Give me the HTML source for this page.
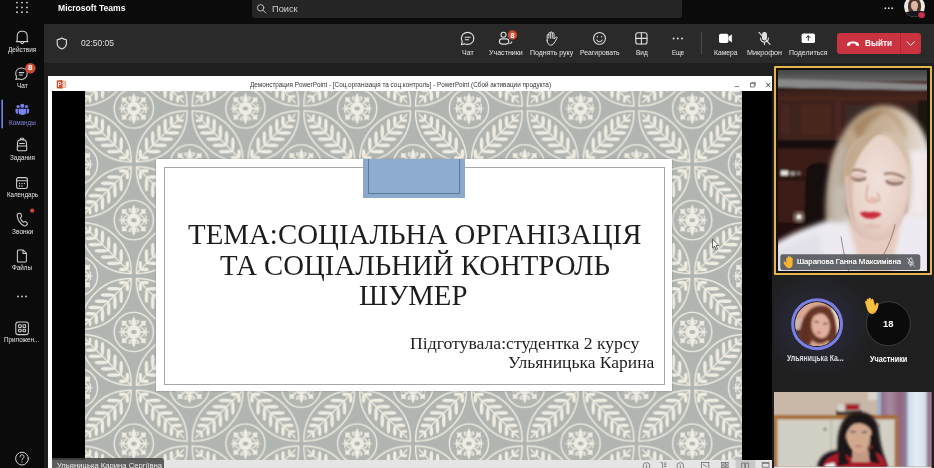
<!DOCTYPE html><html><head><meta charset="utf-8"><title>Teams</title><style>
*{box-sizing:border-box;margin:0;padding:0}
html,body{width:934px;height:468px;overflow:hidden;background:#1f1f1f;font-family:"Liberation Sans",sans-serif;color:#fff}
.abs{position:absolute}
#root{position:relative;width:934px;height:468px;overflow:hidden;background:#1f1f1f}
#topbar{left:0;top:0;width:934px;height:24px;background:#0b0b0b}
#rail{left:0;top:24px;width:44px;height:444px;background:#0b0b0b}
#mbar{left:44px;top:24px;width:890px;height:39px;background:#2a2a2a}
#search{left:252px;top:0;width:430px;height:18px;background:#252525;border-radius:0 0 3px 3px}
.t{position:absolute;white-space:nowrap;line-height:1;transform-origin:0 50%}
#ppt{left:47.6px;top:76.3px;width:724.4px;height:392px;background:#fff}
#pptblack{left:52px;top:91px;width:720px;height:369px;background:#000}
#slide{left:85px;top:91px;width:657px;height:369px;overflow:hidden;background:#b1b5b1}
#status{left:52px;top:460px;width:720px;height:8px;background:#e5e5e5}
#wbox{left:71px;top:68px;width:516px;height:232px;background:#fff;box-shadow:0 0 2px rgba(0,0,0,.25)}
#wline{left:78.5px;top:75.5px;width:501px;height:218.5px;border:1px solid #a6a6a6}
#tab{left:277.5px;top:67.5px;width:102.5px;height:39.5px;background:#8aa9cd}
#tabin{left:283px;top:67.5px;width:92px;height:35px;border:1px solid #5d7898;border-top:none;background:#8dacd0}
.ser{font-family:"Liberation Serif",serif;color:#1d1d1d}
.lbl{color:#e6e6e6}
</style></head><body><div id="root"><div id="topbar" class="abs"></div><div id="search" class="abs"></div><div id="rail" class="abs"></div><div id="mbar" class="abs"></div><div id="ppt" class="abs"></div><div id="pptblack" class="abs"></div><div id="status" class="abs"></div><div id="slide" class="abs"><svg class="pat" width="657" height="369" viewBox="0 0 657 369"><defs><g id="lens"><path d="M3.60,0 A49.75,49.75 0 0 1 75.38,0 A49.75,49.75 0 0 1 3.60,0 Z" fill="none" stroke="#efece1" stroke-width="1.45" stroke-linejoin="miter"/><path d="M4.60,0 L70.38,0" stroke="#efece1" stroke-width="1.35" stroke-linecap="round"/><path transform="translate(9.10,0) rotate(-45)" d="M0,-0.5 C1.70,-1.57 2.97,-1.75 5.10,-1.75 C7.48,-1.75 8.50,-1.22 8.50,0 C8.50,1.22 7.48,1.75 5.10,1.75 C2.97,1.75 1.70,1.57 0,0.5 Z" fill="#efece1"/><path transform="translate(9.10,0) rotate(45)" d="M0,-0.5 C1.70,-1.57 2.97,-1.75 5.10,-1.75 C7.48,-1.75 8.50,-1.22 8.50,0 C8.50,1.22 7.48,1.75 5.10,1.75 C2.97,1.75 1.70,1.57 0,0.5 Z" fill="#efece1"/><path transform="translate(17.90,0) rotate(-45)" d="M0,-0.5 C2.85,-1.57 4.99,-1.75 8.55,-1.75 C12.54,-1.75 14.25,-1.22 14.25,0 C14.25,1.22 12.54,1.75 8.55,1.75 C4.99,1.75 2.85,1.57 0,0.5 Z" fill="#efece1"/><path transform="translate(17.90,0) rotate(45)" d="M0,-0.5 C2.85,-1.57 4.99,-1.75 8.55,-1.75 C12.54,-1.75 14.25,-1.22 14.25,0 C14.25,1.22 12.54,1.75 8.55,1.75 C4.99,1.75 2.85,1.57 0,0.5 Z" fill="#efece1"/><path transform="translate(26.69,0) rotate(-45)" d="M0,-0.5 C2.85,-1.57 4.99,-1.75 8.55,-1.75 C12.54,-1.75 14.25,-1.22 14.25,0 C14.25,1.22 12.54,1.75 8.55,1.75 C4.99,1.75 2.85,1.57 0,0.5 Z" fill="#efece1"/><path transform="translate(26.69,0) rotate(45)" d="M0,-0.5 C2.85,-1.57 4.99,-1.75 8.55,-1.75 C12.54,-1.75 14.25,-1.22 14.25,0 C14.25,1.22 12.54,1.75 8.55,1.75 C4.99,1.75 2.85,1.57 0,0.5 Z" fill="#efece1"/><path transform="translate(35.49,0) rotate(-45)" d="M0,-0.5 C2.85,-1.57 4.99,-1.75 8.55,-1.75 C12.54,-1.75 14.25,-1.22 14.25,0 C14.25,1.22 12.54,1.75 8.55,1.75 C4.99,1.75 2.85,1.57 0,0.5 Z" fill="#efece1"/><path transform="translate(35.49,0) rotate(45)" d="M0,-0.5 C2.85,-1.57 4.99,-1.75 8.55,-1.75 C12.54,-1.75 14.25,-1.22 14.25,0 C14.25,1.22 12.54,1.75 8.55,1.75 C4.99,1.75 2.85,1.57 0,0.5 Z" fill="#efece1"/><path transform="translate(44.29,0) rotate(-45)" d="M0,-0.5 C2.85,-1.57 4.99,-1.75 8.55,-1.75 C12.54,-1.75 14.25,-1.22 14.25,0 C14.25,1.22 12.54,1.75 8.55,1.75 C4.99,1.75 2.85,1.57 0,0.5 Z" fill="#efece1"/><path transform="translate(44.29,0) rotate(45)" d="M0,-0.5 C2.85,-1.57 4.99,-1.75 8.55,-1.75 C12.54,-1.75 14.25,-1.22 14.25,0 C14.25,1.22 12.54,1.75 8.55,1.75 C4.99,1.75 2.85,1.57 0,0.5 Z" fill="#efece1"/><path transform="translate(53.09,0) rotate(-45)" d="M0,-0.5 C2.15,-1.57 3.76,-1.75 6.45,-1.75 C9.46,-1.75 10.75,-1.22 10.75,0 C10.75,1.22 9.46,1.75 6.45,1.75 C3.76,1.75 2.15,1.57 0,0.5 Z" fill="#efece1"/><path transform="translate(53.09,0) rotate(45)" d="M0,-0.5 C2.15,-1.57 3.76,-1.75 6.45,-1.75 C9.46,-1.75 10.75,-1.22 10.75,0 C10.75,1.22 9.46,1.75 6.45,1.75 C3.76,1.75 2.15,1.57 0,0.5 Z" fill="#efece1"/><path transform="translate(61.88,0) rotate(-45)" d="M0,-0.5 C1.25,-1.26 2.19,-1.40 3.75,-1.40 C5.50,-1.40 6.25,-0.98 6.25,0 C6.25,0.98 5.50,1.40 3.75,1.40 C2.19,1.40 1.25,1.26 0,0.5 Z" fill="#efece1"/><path transform="translate(61.88,0) rotate(45)" d="M0,-0.5 C1.25,-1.26 2.19,-1.40 3.75,-1.40 C5.50,-1.40 6.25,-0.98 6.25,0 C6.25,0.98 5.50,1.40 3.75,1.40 C2.19,1.40 1.25,1.26 0,0.5 Z" fill="#efece1"/></g><g id="medal"><circle r="19.6" fill="none" stroke="#efece1" stroke-width="1.35"/><path d="M-2.8,-6.6 L2.8,-6.6 L6.6,-2.8 L6.6,2.8 L2.8,6.6 L-2.8,6.6 L-6.6,2.8 L-6.6,-2.8 Z" fill="#efece1"/><g transform="rotate(0)"><path d="M0,-16 C1.2,-12.5 2.6,-11 2.4,-9 C2.2,-7.6 1.2,-7 1.2,-6 L-1.2,-6 C-1.2,-7 -2.2,-7.6 -2.4,-9 C-2.6,-11 -1.2,-12.5 0,-16 Z" fill="#efece1"/><path d="M-1,-8 C-2.5,-8 -4.8,-8.4 -4.8,-10.4 C-4.8,-11.6 -3.4,-11.8 -3,-10.8" fill="none" stroke="#efece1" stroke-width="1.3" stroke-linecap="round"/><path d="M1,-8 C2.5,-8 4.8,-8.4 4.8,-10.4 C4.8,-11.6 3.4,-11.8 3,-10.8" fill="none" stroke="#efece1" stroke-width="1.3" stroke-linecap="round"/></g><g transform="rotate(180)"><path d="M0,-16 C1.2,-12.5 2.6,-11 2.4,-9 C2.2,-7.6 1.2,-7 1.2,-6 L-1.2,-6 C-1.2,-7 -2.2,-7.6 -2.4,-9 C-2.6,-11 -1.2,-12.5 0,-16 Z" fill="#efece1"/><path d="M-1,-8 C-2.5,-8 -4.8,-8.4 -4.8,-10.4 C-4.8,-11.6 -3.4,-11.8 -3,-10.8" fill="none" stroke="#efece1" stroke-width="1.3" stroke-linecap="round"/><path d="M1,-8 C2.5,-8 4.8,-8.4 4.8,-10.4 C4.8,-11.6 3.4,-11.8 3,-10.8" fill="none" stroke="#efece1" stroke-width="1.3" stroke-linecap="round"/></g><g transform="rotate(90)"><path d="M0,-15.8 L1.1,-12 L0.8,-6 L-0.8,-6 L-1.1,-12 Z" fill="#efece1"/><path d="M-4.2,-7.4 C-4.6,-9.2 -1.4,-9.6 -1,-11 C-0.6,-12.6 -3.6,-13 -4,-11.6" fill="none" stroke="#efece1" stroke-width="1.3" stroke-linecap="round"/><path d="M4.2,-7.4 C4.6,-9.2 1.4,-9.6 1,-11 C0.6,-12.6 3.6,-13 4,-11.6" fill="none" stroke="#efece1" stroke-width="1.3" stroke-linecap="round"/></g><g transform="rotate(270)"><path d="M0,-15.8 L1.1,-12 L0.8,-6 L-0.8,-6 L-1.1,-12 Z" fill="#efece1"/><path d="M-4.2,-7.4 C-4.6,-9.2 -1.4,-9.6 -1,-11 C-0.6,-12.6 -3.6,-13 -4,-11.6" fill="none" stroke="#efece1" stroke-width="1.3" stroke-linecap="round"/><path d="M4.2,-7.4 C4.6,-9.2 1.4,-9.6 1,-11 C0.6,-12.6 3.6,-13 4,-11.6" fill="none" stroke="#efece1" stroke-width="1.3" stroke-linecap="round"/></g><path transform="translate(9.6,8.8)" d="M-2.7,-2.7 L-0.9,-2.2 L0.9,-2.2 L2.7,-2.7 L2.2,-0.9 L2.2,0.9 L2.7,2.7 L0.9,2.2 L-0.9,2.2 L-2.7,2.7 L-2.2,0.9 L-2.2,-0.9 Z" fill="#efece1"/><path d="M5,4.6 L8.2,7.4" stroke="#efece1" stroke-width="1.8"/><path transform="translate(9.6,-8.8)" d="M-2.7,-2.7 L-0.9,-2.2 L0.9,-2.2 L2.7,-2.7 L2.2,-0.9 L2.2,0.9 L2.7,2.7 L0.9,2.2 L-0.9,2.2 L-2.7,2.7 L-2.2,0.9 L-2.2,-0.9 Z" fill="#efece1"/><path d="M5,-4.6 L8.2,-7.4" stroke="#efece1" stroke-width="1.8"/><path transform="translate(-9.6,8.8)" d="M-2.7,-2.7 L-0.9,-2.2 L0.9,-2.2 L2.7,-2.7 L2.2,-0.9 L2.2,0.9 L2.7,2.7 L0.9,2.2 L-0.9,2.2 L-2.7,2.7 L-2.2,0.9 L-2.2,-0.9 Z" fill="#efece1"/><path d="M-5,4.6 L-8.2,7.4" stroke="#efece1" stroke-width="1.8"/><path transform="translate(-9.6,-8.8)" d="M-2.7,-2.7 L-0.9,-2.2 L0.9,-2.2 L2.7,-2.7 L2.2,-0.9 L2.2,0.9 L2.7,2.7 L0.9,2.2 L-0.9,2.2 L-2.7,2.7 L-2.2,0.9 L-2.2,-0.9 Z" fill="#efece1"/><path d="M-5,-4.6 L-8.2,-7.4" stroke="#efece1" stroke-width="1.8"/><ellipse rx="2.8" ry="2.1" fill="#b1b5b1"/></g><pattern id="dam" width="111.7" height="111.7" patternUnits="userSpaceOnUse" patternTransform="translate(48.80,17.50)"><rect width="111.7" height="111.7" fill="#b1b5b1"/><use href="#medal" x="0.00" y="0.00"/><use href="#medal" x="111.70" y="0.00"/><use href="#medal" x="0.00" y="111.70"/><use href="#medal" x="111.70" y="111.70"/><use href="#medal" x="55.85" y="55.85"/><use href="#lens" transform="translate(0.00,55.85) rotate(-45.00)"/><use href="#lens" transform="translate(111.70,55.85) rotate(-135.00)"/><use href="#lens" transform="translate(0.00,55.85) rotate(45.00)"/><use href="#lens" transform="translate(111.70,55.85) rotate(135.00)"/></pattern></defs><rect width="657" height="369" fill="url(#dam)"/></svg><div id="wbox" class="abs"></div><div id="wline" class="abs"></div><div id="tab" class="abs"></div><div id="tabin" class="abs"></div></div><div class="t " style="left:57.7px;top:4.30px;font-size:8.8px;height:8.8px;font-weight:bold;transform:scaleX(0.9733);">Microsoft Teams</div><div class="t " style="left:272px;top:4.80px;font-size:8.4px;height:8.4px;color:#d0d0d0;transform:scaleX(1.1026);">Поиск</div><div class="t " style="left:80.5px;top:39.10px;font-size:9px;height:9px;color:#e0e0e0;transform:scaleX(0.9416);">02:50:05</div><div class="t lbl" style="left:462px;top:48.75px;font-size:7.5px;height:7.5px;transform:scaleX(0.9315);">Чат</div><div class="t lbl" style="left:489.3px;top:48.75px;font-size:7.5px;height:7.5px;transform:scaleX(0.9430);">Участники</div><div class="t lbl" style="left:530px;top:48.75px;font-size:7.5px;height:7.5px;transform:scaleX(0.9319);">Поднять руку</div><div class="t lbl" style="left:580.3px;top:48.75px;font-size:7.5px;height:7.5px;transform:scaleX(0.9094);">Реагировать</div><div class="t lbl" style="left:636px;top:48.75px;font-size:7.5px;height:7.5px;transform:scaleX(0.8690);">Вид</div><div class="t lbl" style="left:672px;top:48.75px;font-size:7.5px;height:7.5px;transform:scaleX(0.7992);">Еще</div><div class="t lbl" style="left:713.8px;top:48.75px;font-size:7.5px;height:7.5px;transform:scaleX(0.8963);">Камера</div><div class="t lbl" style="left:747px;top:48.75px;font-size:7.5px;height:7.5px;transform:scaleX(0.9577);">Микрофон</div><div class="t lbl" style="left:788.6px;top:48.75px;font-size:7.5px;height:7.5px;transform:scaleX(0.9295);">Поделиться</div><div class="t lbl" style="left:8.2px;top:46.60px;font-size:6.8px;height:6.8px;transform:scaleX(0.9503);">Действия</div><div class="t lbl" style="left:17px;top:83.10px;font-size:6.8px;height:6.8px;transform:scaleX(0.9573);">Чат</div><div class="t " style="left:9px;top:119.60px;font-size:6.8px;height:6.8px;color:#8286d9;transform:scaleX(0.9302);">Команды</div><div class="t lbl" style="left:9.9px;top:155.00px;font-size:6.8px;height:6.8px;transform:scaleX(0.9265);">Задания</div><div class="t lbl" style="left:6.6px;top:191.90px;font-size:6.8px;height:6.8px;transform:scaleX(0.9035);">Календарь</div><div class="t lbl" style="left:11.8px;top:228.80px;font-size:6.8px;height:6.8px;transform:scaleX(0.9657);">Звонки</div><div class="t lbl" style="left:12.2px;top:265.00px;font-size:6.8px;height:6.8px;transform:scaleX(0.9255);">Файлы</div><div class="t lbl" style="left:3.5px;top:337.40px;font-size:6.8px;height:6.8px;transform:scaleX(0.9297);">Приложен...</div><div class="t " style="left:249.5px;top:81.70px;font-size:6.6px;height:6.6px;color:#333;transform:scaleX(0.9625);">Демонстрация PowerPoint - [Соц.організація та соц.контроль] - PowerPoint (Сбой активации продукта)</div><div class="t ser" style="left:187.6px;top:219.40px;font-size:30.2px;height:30.2px;transform:scaleX(0.9572);">ТЕМА:СОЦІАЛЬНА ОРГАНІЗАЦІЯ</div><div class="t ser" style="left:219.8px;top:250.10px;font-size:30.2px;height:30.2px;transform:scaleX(0.9528);">ТА СОЦІАЛЬНИЙ КОНТРОЛЬ</div><div class="t ser" style="left:359.4px;top:279.70px;font-size:30.2px;height:30.2px;transform:scaleX(0.9517);">ШУМЕР</div><div class="t ser" style="left:410.2px;top:335.00px;font-size:17px;height:17px;transform:scaleX(1.0393);">Підготувала:студентка 2 курсу</div><div class="t ser" style="left:508.4px;top:354.10px;font-size:17px;height:17px;transform:scaleX(1.0316);">Ульяницька Карина</div><div class="t " style="left:864.8px;top:39.25px;font-size:8.9px;height:8.9px;font-weight:bold;z-index:5;transform:scaleX(0.9231);">Выйти</div><div class="t " style="left:786.8px;top:354.20px;font-size:8.4px;height:8.4px;font-weight:bold;transform:scaleX(0.8253);">Ульяницька Ка...</div><div class="t " style="left:869.7px;top:354.80px;font-size:8.4px;height:8.4px;font-weight:bold;transform:scaleX(0.8665);">Участники</div><div class="t " style="left:883.2px;top:318.85px;font-size:9.5px;height:9.5px;font-weight:bold;z-index:5;transform:scaleX(0.9926);">18</div><div class="t " style="left:797.2px;top:258.10px;font-size:7.8px;height:7.8px;z-index:6;color:#f4f4f4;text-shadow:0 0 0.3px #fff;transform:scaleX(0.9899);">Шарапова Ганна Максимівна</div><div class="t " style="left:56.5px;top:461.95px;font-size:7.9px;height:7.9px;z-index:6;color:#f0f0f0;transform:scaleX(0.9719);">Ульяницька Карина Сергіївна</div><svg class="abs" style="left:0;top:0" width="50" height="468" viewBox="0 0 50 468" fill="none" stroke="#cfcfcf" stroke-width="1.05" stroke-linecap="round" stroke-linejoin="round">
<!-- waffle -->
<g fill="#e8e8e8" stroke="none">
<circle cx="17" cy="2.6" r="0.85"/><circle cx="22" cy="2.6" r="0.85"/><circle cx="27" cy="2.6" r="0.85"/>
<circle cx="17" cy="7.4" r="0.85"/><circle cx="22" cy="7.4" r="0.85"/><circle cx="27" cy="7.4" r="0.85"/>
<circle cx="17" cy="12.2" r="0.85"/><circle cx="22" cy="12.2" r="0.85"/><circle cx="27" cy="12.2" r="0.85"/>
</g>
<!-- bell -->
<path d="M17.2,40.6 L17.2,36 C17.2,33 19.2,31.2 22.2,31.2 C25.2,31.2 27.2,33 27.2,36 L27.2,40.6 L28,41.6 L16.4,41.6 Z"/>
<path d="M20.6,42 C20.8,43.2 21.4,43.6 22.2,43.6 C23,43.6 23.6,43.2 23.8,42"/>
<!-- chat -->
<path d="M21.4,68 C24.8,68 27.2,70.4 27.2,73.6 C27.2,76.8 24.8,79.4 21.4,79.4 C20.4,79.4 19.4,79.2 18.6,78.8 L15.8,79.6 L16.6,76.8 C16,75.8 15.7,74.8 15.7,73.6 C15.7,70.4 18,68 21.4,68 Z"/>
<path d="M19.2,72.6 L23.8,72.6 M19.2,75 L22.4,75"/>
<circle cx="30.4" cy="68.2" r="5.2" fill="#cc4a31" stroke="none"/>
<!-- active bar -->
<rect x="1.4" y="99.5" width="1.6" height="29" rx="0.8" fill="#7b83eb" stroke="none"/>
<!-- teams icon -->
<g fill="#7b83eb" stroke="none" transform="translate(22.3,110) scale(0.84) translate(-22.3,-110.6)">
<circle cx="22.3" cy="105.6" r="2.5"/><circle cx="17.3" cy="106.4" r="1.9"/><circle cx="27.3" cy="106.4" r="1.9"/>
<path d="M18.6,109 L26,109 C26.5,109 26.8,109.3 26.8,109.8 L26.8,113 C26.8,115.4 24.9,116.6 22.3,116.6 C19.7,116.6 17.8,115.4 17.8,113 L17.8,109.8 C17.8,109.3 18.1,109 18.6,109 Z"/>
<path d="M14.8,109.2 L17,109.2 L17,113.4 C17,114.2 17.2,114.8 17.5,115.3 C15.7,115.2 14.2,114.2 14.2,112.4 L14.2,109.8 C14.2,109.4 14.4,109.2 14.8,109.2 Z"/>
<path d="M29.8,109.2 L27.6,109.2 L27.6,113.4 C27.6,114.2 27.4,114.8 27.1,115.3 C28.9,115.2 30.4,114.2 30.4,112.4 L30.4,109.8 C30.4,109.4 30.2,109.2 29.8,109.2 Z"/>
</g>
<!-- assignments (backpack) -->
<path d="M17.6,142.6 C17.6,140.4 19.4,139.6 22,139.6 C24.6,139.6 26.4,140.4 26.4,142.6 L26.8,149.6 C26.8,150.4 26.4,150.8 25.6,150.8 L18.4,150.8 C17.6,150.8 17.2,150.4 17.2,149.6 Z"/>
<path d="M20.2,139.6 C20.2,138.4 20.8,138 22,138 C23.2,138 23.8,138.4 23.8,139.6 M17.4,146 L26.6,146 M19.6,143.4 L24.4,143.4"/>
<!-- calendar -->
<rect x="16.6" y="177.6" width="10.8" height="10.8" rx="2"/>
<path d="M16.6,180.8 L27.4,180.8"/>
<g fill="#dcdcdc" stroke="none"><circle cx="19.6" cy="183.6" r="0.7"/><circle cx="22" cy="183.6" r="0.7"/><circle cx="24.4" cy="183.6" r="0.7"/><circle cx="19.6" cy="186" r="0.7"/><circle cx="22" cy="186" r="0.7"/></g>
<!-- calls -->
<path d="M18.2,213.6 L19.8,213.2 C20.3,213.1 20.7,213.4 20.9,213.8 L21.6,215.8 C21.7,216.2 21.6,216.6 21.3,216.9 L20.3,217.8 C20.8,219.6 22,221.2 23.6,222.2 L24.8,221.6 C25.2,221.4 25.6,221.5 25.9,221.8 L27.2,223.2 C27.5,223.6 27.5,224.1 27.2,224.4 L26.4,225.4 C25.8,226 24.9,226.2 24.1,225.8 C20.4,224 17.8,220 17.2,215.6 C17.1,214.7 17.5,213.9 18.2,213.6 Z"/>
<circle cx="32.2" cy="210.7" r="2.1" fill="#cc4a31" stroke="none"/>
<!-- files -->
<path d="M18.4,250 L23.2,250 L26.4,253.2 L26.4,261 C26.4,261.6 26,262 25.4,262 L18.4,262 C17.8,262 17.4,261.6 17.4,261 L17.4,251 C17.4,250.4 17.8,250 18.4,250 Z M23,250.2 L23,253.4 L26.2,253.4"/>
<!-- more -->
<g fill="#d0d0d0" stroke="none"><circle cx="18" cy="296.5" r="0.9"/><circle cx="22" cy="296.5" r="0.9"/><circle cx="26" cy="296.5" r="0.9"/></g>
<!-- apps -->
<rect x="15.8" y="322" width="12.6" height="12.6" rx="2.4"/>
<rect x="18.6" y="324.8" width="2.6" height="2.6" rx="0.5"/><rect x="23" y="324.8" width="2.6" height="2.6" rx="0.5"/>
<rect x="18.6" y="329.2" width="2.6" height="2.6" rx="0.5"/><rect x="23" y="329.2" width="2.6" height="2.6" rx="0.5"/>
<!-- help -->
<circle cx="22" cy="458.6" r="6.4" stroke-width="1"/>
<path d="M20,456.8 C20,455.4 20.8,454.8 22,454.8 C23.2,454.8 24,455.5 24,456.6 C24,458.2 22,458.2 22,459.8" stroke-width="1"/>
<circle cx="22" cy="461.8" r="0.6" fill="#dcdcdc" stroke="none"/>
</svg>
<div class="t" style="left:28.1px;top:64.4px;font-size:8px;height:8px;font-weight:bold;color:#fff;z-index:3">8</div>
<!-- leave button -->
<div class="abs" style="left:837px;top:33px;width:84px;height:21px;background:#cc3340;border-radius:3px"></div>
<div class="abs" style="left:899.5px;top:33px;width:1px;height:21px;background:#b02634"></div>
<svg class="abs" style="left:44px;top:0" width="890" height="64" viewBox="44 0 890 64" fill="none" stroke="#e0e0e0" stroke-width="1.1" stroke-linecap="round" stroke-linejoin="round">
<!-- search icon -->
<circle cx="260.6" cy="7.8" r="3.2" stroke="#c4c4c4" stroke-width="0.95"/><path d="M263,10.2 L265.8,13" stroke="#c4c4c4" stroke-width="0.95"/>
<!-- top-right more -->
<g fill="#e0e0e0" stroke="none"><circle cx="885.4" cy="8.2" r="0.9"/><circle cx="888.8" cy="8.2" r="0.9"/><circle cx="892.2" cy="8.2" r="0.9"/></g>
<!-- shield -->
<path d="M61.8,38 C63.4,39.2 64.8,39.6 66.4,39.8 L66.4,43.4 C66.4,46 64.6,47.8 61.8,48.9 C59,47.8 57.2,46 57.2,43.4 L57.2,39.8 C58.8,39.6 60.2,39.2 61.8,38 Z"/>
<!-- chat -->
<path d="M467.6,32.4 C471.2,32.4 473.8,35 473.8,38.4 C473.8,41.8 471.2,44.4 467.6,44.4 C466.5,44.4 465.5,44.2 464.6,43.7 L461.4,44.6 L462.3,41.5 C461.7,40.6 461.4,39.5 461.4,38.4 C461.4,35 464,32.4 467.6,32.4 Z"/>
<path d="M465.2,37.2 L470.2,37.2 M465.2,39.8 L468.6,39.8"/>
<!-- people -->
<circle cx="503.5" cy="34.7" r="2.5"/>
<rect x="499.4" y="38.9" width="9.4" height="5.2" rx="2.5"/>
<path d="M509.8,43.5 C511,43.3 511.7,42.7 511.9,41.7"/>
<circle cx="512.4" cy="35" r="4.7" fill="#cc4a31" stroke="none"/>
<!-- hand -->
<path d="M547.2,40.6 L547.2,35.2 C547.2,34 548.9,34 548.9,35.2 L548.9,33.2 C548.9,32 550.6,32 550.6,33.2 L550.6,32.8 C550.6,31.6 552.3,31.6 552.3,32.8 L552.3,33.6 C552.3,32.5 554,32.5 554,33.7 L554,39 L555.6,37.2 C556.4,36.4 557.6,37.2 557,38.2 C556,40 554.8,42.6 553.2,44.2 C551.8,45.6 549.4,45.4 548.2,43.8 C547.4,42.8 547.2,41.8 547.2,40.6 Z" stroke-width="1"/>
<path d="M548.9,35.2 L548.9,38.2 M550.6,33.2 L550.6,38.2 M552.3,33.6 L552.3,38.2" stroke-width="0.9"/>
<!-- smiley -->
<circle cx="599.5" cy="38.4" r="5.9"/>
<circle cx="597.4" cy="36.8" r="0.7" fill="#e0e0e0" stroke="none"/><circle cx="601.6" cy="36.8" r="0.7" fill="#e0e0e0" stroke="none"/>
<path d="M596.8,40 C597.6,41.4 598.4,41.8 599.5,41.8 C600.6,41.8 601.4,41.4 602.2,40"/>
<!-- view grid -->
<rect x="635.8" y="32.8" width="11.2" height="11.2" rx="2"/><path d="M641.4,32.8 L641.4,44 M635.8,38.4 L647,38.4"/>
<!-- more -->
<g fill="#e0e0e0" stroke="none"><circle cx="673.6" cy="38.4" r="1"/><circle cx="677.8" cy="38.4" r="1"/><circle cx="682" cy="38.4" r="1"/></g>
<path d="M701.4,33 L701.4,54" stroke="#555" stroke-width="0.9"/>
<!-- camera -->
<rect x="719" y="33.8" width="9.4" height="9.2" rx="1.8" fill="#fff" stroke="none"/>
<path d="M729,36.8 L731.6,34.8 L731.6,42 L729,40 Z" fill="#fff" stroke="#fff" stroke-width="0.6"/>
<!-- mic off -->
<rect x="762.6" y="32.6" width="3.8" height="7.4" rx="1.9" fill="#dcdcdc"/>
<path d="M760.6,38 C760.6,40.6 762.2,42 764.5,42 C766.8,42 768.4,40.6 768.4,38 M764.5,42 L764.5,44.6"/>
<path d="M759,32.4 L770,44.4" stroke-width="1.1"/>
<!-- share -->
<rect x="801.6" y="33.4" width="13.4" height="9.6" rx="1.6" fill="#fff" stroke="none"/>
<path d="M808.3,40.4 L808.3,36 M806.4,37.6 L808.3,35.7 L810.2,37.6" stroke="#2a2a2a" stroke-width="1"/>
<!-- hang up phone -->
<path d="M847,44.6 C847,42.6 849.8,41.4 853,41.4 C856.2,41.4 859,42.6 859,44.6 L859,45.2 C859,45.8 858.6,46 858.2,45.9 L856.2,45.5 C855.8,45.4 855.6,45.1 855.6,44.8 L855.6,43.8 C854,43.3 852,43.3 850.4,43.8 L850.4,44.8 C850.4,45.1 850.2,45.4 849.8,45.5 L847.8,45.9 C847.4,46 847,45.8 847,45.2 Z" fill="#fff" stroke="none"/>
<path d="M907,41.8 L910.7,45.4 L914.4,41.8" stroke="#fff" stroke-width="1"/>
</svg>
<div class="t" style="left:510.4px;top:31.5px;font-size:7.2px;height:7.2px;font-weight:bold;color:#fff;z-index:3">8</div>
<!-- user avatar -->
<div class="abs" style="left:904px;top:-4.2px;width:21.4px;height:21.4px;border-radius:50%;overflow:hidden;background:#ece8e2">
 <div class="abs" style="left:4.4px;top:2px;width:12.6px;height:17px;border-radius:45%;background:#4b362b"></div>
 <div class="abs" style="left:7.4px;top:5.6px;width:7px;height:9px;border-radius:50%;background:#dcb7a4"></div>
 <div class="abs" style="left:9.2px;top:13px;width:3.6px;height:4px;background:#d2a894"></div>
 <div class="abs" style="left:-1px;top:15.4px;width:24px;height:9px;border-radius:45% 45% 0 0;background:#15171e"></div>
</div>
<div class="abs" style="left:917.4px;top:10.6px;width:8.4px;height:8.4px;border-radius:50%;background:#c4314b;border:0.8px solid #0b0b0b"></div>
<!-- video 1 frame -->
<div class="abs" style="left:774px;top:66px;width:157.5px;height:209px;background:#15100d;border:2.6px solid #e5b64c;border-radius:1px"></div>
<svg class="abs" style="left:778px;top:69.5px" width="149" height="201.5" viewBox="778 69.5 149 201.5">
<defs>
<filter id="b1" x="-10%" y="-10%" width="120%" height="120%"><feGaussianBlur stdDeviation="1.1"/></filter>
<filter id="b2" x="-20%" y="-20%" width="140%" height="140%"><feGaussianBlur stdDeviation="2.4"/></filter>
<filter id="b3" x="-30%" y="-30%" width="160%" height="160%"><feGaussianBlur stdDeviation="4.5"/></filter>
<linearGradient id="hairg" x1="0" y1="0" x2="1" y2="0"><stop offset="0" stop-color="#ad9c87"/><stop offset="0.3" stop-color="#bfa98d"/><stop offset="0.6" stop-color="#c8b196"/><stop offset="0.85" stop-color="#ded3c8"/><stop offset="1" stop-color="#ebe6e3"/></linearGradient>
<linearGradient id="ceil" x1="0" y1="0" x2="0" y2="1"><stop offset="0" stop-color="#3c3c3c"/><stop offset="1" stop-color="#666"/></linearGradient>
<radialGradient id="root" cx="0.5" cy="0.5" r="0.5"><stop offset="0" stop-color="#a38465" stop-opacity="1"/><stop offset="0.6" stop-color="#b4977a" stop-opacity="0.8"/><stop offset="1" stop-color="#c2aa90" stop-opacity="0"/></radialGradient><radialGradient id="faceg" cx="0.5" cy="0.45" r="0.6"><stop offset="0" stop-color="#f1e1da"/><stop offset="0.7" stop-color="#e8d2c8"/><stop offset="1" stop-color="#d8b9ad"/></radialGradient>
</defs>
<rect x="778" y="69.5" width="149" height="201.5" fill="#3a1d19"/>
<g filter="url(#b1)">
 <!-- ceiling -->
 <rect x="776" y="67" width="153" height="14" fill="url(#ceil)"/>
 <path d="M776,78.6 L929,83.2 L929,90 L776,87 Z" fill="#898989"/>
 <path d="M776,87 L929,90 L929,93 L776,90 Z" fill="#2a1512"/>
 <!-- cabinets -->
 <rect x="776" y="90" width="153" height="50" fill="#40211c"/>
 <rect x="801" y="104" width="30" height="30.5" fill="#4a271f"/>
 <rect x="781" y="104" width="9" height="30" fill="#472520"/>
 <rect x="835" y="96" width="6" height="44" fill="#4a2720"/>
 <rect x="845" y="105" width="50" height="30" fill="#3a2a28"/>
 <rect x="905" y="104" width="18" height="30" fill="#33221f"/>
 <rect x="776" y="96" width="153" height="3.5" fill="#4a251e"/>
 <rect x="776" y="139.5" width="153" height="8.5" fill="#150b0a"/>
 <rect x="776" y="148" width="40" height="80" fill="#3b1c17"/>
 <rect x="918" y="100" width="11" height="60" fill="#1d1211"/>
 <!-- lower left bg -->
 <rect x="776" y="176" width="32" height="4" fill="#2a1411"/>
 <rect x="776" y="222" width="70" height="22" fill="#24110f"/>
 <!-- chair / dark shape -->
 <path d="M806,172 C806,160 830,158 832,172 L834,226 L804,230 Z" fill="#120c0b"/>
 <rect x="781" y="170" width="7" height="5" fill="#e8e4de"/><rect x="790" y="171" width="5" height="4" fill="#9a948c"/><rect x="796.5" y="171" width="4" height="3.6" fill="#77706a"/>
</g>
<circle cx="799" cy="216.5" r="4.6" fill="#d9d4cc" filter="url(#b2)" opacity="0.9"/>
<circle cx="799" cy="216.3" r="2" fill="#fff" filter="url(#b1)"/>
<!-- hair back -->
<g filter="url(#b2)">
 <path d="M826,222 C824,196 828,160 840,138 C852,114 872,104 886,105 C906,106 922,122 929,146 L931,222 L905,224 L905,180 L850,176 L848,222 Z" fill="url(#hairg)"/>
 <path d="M852,128 C862,112 880,106 892,110 C880,112 868,122 860,140 Z" fill="#a5835f" opacity="0.9"/>
 <path d="M878,108 C890,112 900,124 906,140 C908,126 896,108 878,108 Z" fill="#b3936f" opacity="0.8"/>
 <ellipse cx="876" cy="128" rx="44" ry="30" fill="url(#root)"/>
</g>
<!-- shirt -->
<g filter="url(#b2)">
 <path d="M774,244 C790,232 820,222 846,214 L862,230 L884,236 L900,212 C912,212 922,214 931,216 L931,275 L774,275 Z" fill="#edebf1"/>
 <path d="M774,252 C790,242 806,236 820,232 L824,275 L774,275 Z" fill="#e2e1ea"/>
</g>
<!-- neck -->
<path d="M848,222 C852,238 858,256 862,275 L892,275 C894,256 898,236 902,216 Z" fill="#e6cbc0" filter="url(#b2)"/>
<!-- face -->
<g filter="url(#b1)">
 <path d="M845,170 C845,150 856,134 880,134 C902,134 911,150 910,176 C910,200 906,222 890,236 C878,243 862,240 853,228 C846,214 844,190 845,170 Z" fill="url(#faceg)"/>
</g>
<g filter="url(#b1)">
 <path d="M848,171.4 C853,168.6 860,168.8 866,171.8" stroke="#7d5c48" stroke-width="2.1" fill="none" opacity="0.85"/>
 <path d="M884,173.4 C891,171.8 899,174 905,178" stroke="#7d5c48" stroke-width="2.1" fill="none" opacity="0.85"/>
 <path d="M850.6,176.6 C855,179.6 861,179.8 865.6,177.6 C861,181 854,180.6 850.6,176.6 Z" stroke="#3a2a26" stroke-width="1.4" fill="#4a3631"/>
 <path d="M886,180.4 C891,183.4 897,183.8 902.6,181.6 C897,185 890,184.4 886,180.4 Z" stroke="#3a2a26" stroke-width="1.4" fill="#4a3631"/>
 <path d="M846,176 C846,196 850,214 856,226 C852,206 852,190 854,176 Z" fill="#cfa999" opacity="0.55"/>
 <path d="M868,184 C867,190 865.6,195 866.6,199.6 C869,202.6 877,202.6 879.4,199.4 C880,196 878,194 877,192" fill="none" stroke="#cf9f90" stroke-width="1.5" opacity="0.85"/>
 <ellipse cx="873" cy="199.4" rx="4.6" ry="2.8" fill="#e3b7a8" opacity="0.8"/>
 <path d="M859.6,212.6 C864,210.4 867,211.2 870,211.8 C873,210.8 878,211.2 881.6,213.8 C878,217.8 872,219 866.6,217.8 C863.6,217 861,215 859.6,212.6 Z" fill="#c92f3c"/>
 <ellipse cx="872" cy="226" rx="9" ry="3" fill="#dcb8ac" opacity="0.6"/>
</g>
<g filter="url(#b1)">
 <path d="M843,176 C843,150 858,131 881,131 C872,138 858,150 851,176 Z" fill="#c3ab90"/>
 <path d="M881,131 C903,131 913,150 912,180 C908,158 898,142 881,131 Z" fill="#d3c0aa"/>
 <ellipse cx="858" cy="178" rx="8" ry="4" fill="#cfa697" opacity="0.45"/>
 <ellipse cx="894" cy="181.6" rx="8" ry="4" fill="#cfa697" opacity="0.45"/>
</g>
<!-- hair front strands -->
<g filter="url(#b2)">
 <path d="M846,150 C840,170 838,200 842,220 L832,222 C828,196 830,164 842,140 Z" fill="#bdb2a6"/>
 <path d="M909,150 C914,170 914,196 908,214 L926,214 L929,150 Z" fill="#efeceb"/>
 <path d="M836,186 C832,200 834,214 838,222 L850,222 C844,210 846,196 848,184 Z" fill="#c6bdb3" opacity="0.9"/>
</g>
<!-- necklace -->
<path d="M841,236 C843,250 846,262 849,271 M895,224 C892,238 887,248 883,255" stroke="#5a4038" stroke-width="0.7" fill="none" opacity="0.8"/>
<!-- name tag -->
<rect x="780.3" y="253.7" width="140" height="15.9" rx="2.4" fill="#53565b" opacity="0.9"/>
<!-- hand emoji -->
<g transform="translate(789,261.8) scale(0.72)">
 <path d="M-3,7 C-5.4,5 -7.6,1.6 -7.6,-0.4 C-7.6,-1.8 -6,-2 -5.2,-0.8 L-3.8,1.2 L-3.8,-5.6 C-3.8,-7.2 -1.6,-7.2 -1.6,-5.6 L-1.6,-7.4 C-1.6,-9 0.6,-9 0.6,-7.4 L0.6,-7 C0.6,-8.6 2.8,-8.6 2.8,-7 L2.8,-5.6 C2.8,-7 5,-7 5,-5.4 L5,2 C5,5 3.6,7.8 0.6,8.2 C-0.8,8.4 -2,7.8 -3,7 Z" fill="#f5b62e"/>
</g>
<!-- mic off -->
<g stroke="#e8e8e8" stroke-width="0.8" fill="none" stroke-linecap="round">
 <rect x="909.5" y="257.6" width="2.6" height="5" rx="1.3"/>
 <path d="M908.2,261.4 C908.2,263.2 909.3,264.2 910.8,264.2 C912.3,264.2 913.4,263.2 913.4,261.4 M910.8,264.2 L910.8,266"/>
 <path d="M907.2,257.6 L914.4,265.8"/>
</g>
</svg>
<!-- avatar glow + ring -->
<div class="abs" style="left:774px;top:278px;width:160px;height:110px;background:radial-gradient(ellipse 62px 58px at 43px 46px, rgba(52,56,92,.55), rgba(31,31,31,0) 100%)"></div>
<svg class="abs" style="left:785px;top:292px" width="130" height="66" viewBox="785 292 130 66">
<defs>
<filter id="c1" x="-20%" y="-20%" width="140%" height="140%"><feGaussianBlur stdDeviation="1.2"/></filter>
<clipPath id="avc"><circle cx="817.1" cy="324.2" r="21.9"/></clipPath>
</defs>
<circle cx="817.1" cy="324.2" r="24.4" fill="#17171c" stroke="#7a7fe3" stroke-width="3.1"/>
<g clip-path="url(#avc)">
 <rect x="790" y="298" width="56" height="56" fill="#d4a08b"/>
 <g filter="url(#c1)">
  <rect x="790" y="296" width="34" height="20" fill="#dca793"/>
  <rect x="832" y="306" width="14" height="34" fill="#f2dfcd"/>
  <rect x="836" y="336" width="12" height="14" fill="#c98f78"/>
  <rect x="793" y="318" width="9" height="11" fill="#cdb3aa"/>
  <rect x="793" y="330" width="8" height="6" fill="#3a2f38"/>
  <path d="M798,352 C797,334 802,312 814,307 C824,303 833,308 835,318 C838,330 838,342 834,350 L826,356 L800,356 Z" fill="#693526"/>
  <ellipse cx="820.6" cy="325.6" rx="9.2" ry="12.6" transform="rotate(-8 820.6 325.6)" fill="#e2b19e"/>
  <path d="M810,318 C809,328 808,340 810,350 L801,352 C799,340 802,324 808,314 Z" fill="#5f2d20"/>
  <path d="M811,312 C816,307 828,307 832,316 C826,312 818,312 811,318 Z" fill="#693526"/>
  <path d="M812,340 C816,345 824,345 828,340 L832,356 L806,356 Z" fill="#d7a38f"/>
  <ellipse cx="818.6" cy="332.6" rx="2.4" ry="1.2" fill="#b96563"/>
  <path d="M814.6,321.4 L818.6,322.4 M823.4,324 L827.4,323.4" stroke="#3e241f" stroke-width="1.3"/>
 </g>
</g>
<!-- count circle -->
<circle cx="888.4" cy="323.7" r="22" fill="#0b0b0b" stroke="#4c4c4c" stroke-width="0.7"/>
<!-- hand emoji -->
<g transform="translate(871.3,306) rotate(-16) scale(-0.98,0.98)">
 <path d="M-3,7 C-5.4,5 -7.6,1.6 -7.6,-0.4 C-7.6,-1.8 -6,-2 -5.2,-0.8 L-3.8,1.2 L-3.8,-5.6 C-3.8,-7.2 -1.6,-7.2 -1.6,-5.6 L-1.6,-7.4 C-1.6,-9 0.6,-9 0.6,-7.4 L0.6,-7 C0.6,-8.6 2.8,-8.6 2.8,-7 L2.8,-5.6 C2.8,-7 5,-7 5,-5.4 L5,2 C5,5 3.6,7.8 0.6,8.2 C-0.8,8.4 -2,7.8 -3,7 Z" fill="#f6bf3d"/>
 <path d="M-3,7 C-1.4,8.2 1.6,8.4 3.2,6.4 C1.6,7.4 -1,7.4 -3,6 Z" fill="#d8952a"/>
</g>
</svg>
<!-- video 2 -->
<svg class="abs" style="left:774px;top:392px" width="157.5" height="76" viewBox="774 392 157.5 76">
<defs>
<filter id="d1" x="-10%" y="-10%" width="120%" height="120%"><feGaussianBlur stdDeviation="0.9"/></filter>
<filter id="d2" x="-20%" y="-20%" width="140%" height="140%"><feGaussianBlur stdDeviation="1.8"/></filter>
<linearGradient id="win" x1="0" y1="0" x2="1" y2="0"><stop offset="0" stop-color="#c9d6e6"/><stop offset="0.5" stop-color="#e6eef6"/><stop offset="1" stop-color="#cfd9e6"/></linearGradient>
<linearGradient id="curt" x1="0" y1="0" x2="1" y2="0"><stop offset="0" stop-color="#8f6a86"/><stop offset="0.35" stop-color="#a98aa2"/><stop offset="0.7" stop-color="#8e6783"/><stop offset="1" stop-color="#9c7791"/></linearGradient>
<clipPath id="v2c"><rect x="774" y="392" width="157.5" height="74.6"/></clipPath>
</defs>
<rect x="774" y="466.4" width="157.5" height="2" fill="#e8e8e8"/>
<g clip-path="url(#v2c)">
<rect x="774" y="392" width="157.5" height="75" fill="#c7b6a6"/>
<g filter="url(#d1)">
 <rect x="772" y="390" width="112" height="26" fill="#c9b8a8"/>
 <rect x="868" y="392" width="14" height="8" fill="#ddd6cc"/>
 <!-- curtains & window -->
 <rect x="877" y="390" width="5" height="30" fill="#9fb2c8"/>
 <rect x="881" y="390" width="26" height="80" fill="url(#curt)"/>
 <rect x="906" y="390" width="22" height="80" fill="url(#win)"/>
 <rect x="926.6" y="390" width="7" height="80" fill="#9b7790"/>
 <rect x="906" y="390" width="1.6" height="80" fill="#7f93b0"/>
 <!-- cabinet -->
 <rect x="772" y="415" width="126.5" height="4.6" fill="#a66d34"/>
 <rect x="772" y="419.4" width="126" height="50" fill="#d2cfc4"/>
 <rect x="772" y="419.4" width="5.4" height="50" fill="#a8713a"/>
 <rect x="894.6" y="419.4" width="3.8" height="50" fill="#a8713a"/>
 <rect x="830.6" y="420" width="1.2" height="48" fill="#b4afa2"/>
 <rect x="879" y="420" width="1" height="48" fill="#b9b4a8"/>
 <circle cx="825" cy="429.4" r="1.8" fill="#8f8b84"/>
 <circle cx="878.6" cy="425.6" r="1.4" fill="#8f8b84"/>
 <!-- clock -->
 <rect x="836" y="410.4" width="26" height="4.4" fill="#2a2624"/>
 <rect x="837.6" y="404.6" width="8" height="7" fill="#d8d4cc"/>
 <rect x="844.6" y="403" width="15.6" height="8.6" fill="#9e8f88"/>
 <rect x="846.2" y="404.6" width="12.4" height="5.2" fill="#a81a2a"/>
</g>
<!-- woman -->
<g filter="url(#d2)">
 <path d="M838,452 C836,436 840,418 852,413 C866,409 878,416 879,432 C880,444 884,456 888,468 L826,468 C830,462 838,460 838,452 Z" fill="#1d1518"/>
 <path d="M817,468 C818,456 828,450 840,450 L846,468 Z" fill="#17181c"/>
</g>
<g filter="url(#d1)">
 <path d="M822,468 C824,458 832,454 842,452 L852,458 L870,458 L876,452 C882,454 886,460 887,468 Z" fill="#a81d2c"/>
 <path d="M852,448 L868,448 L870,462 L852,462 Z" fill="#c49a86"/>
 <path d="M846,434 C846,424 852,419 859,419 C867,419 872,425 872,434 C872,444 866,453 859,453 C852,453 846,444 846,434 Z" fill="#d2a88f"/>
 <path d="M846,436 C844,444 844,456 850,464 L838,466 C838,452 840,436 848,424 Z" fill="#1b1316"/>
 <path d="M872,434 C874,444 876,456 880,464 L870,462 C868,452 870,444 870,436 Z" fill="#1b1316"/>
 <path d="M846,430 C848,420 858,416 866,420 C870,422 872,428 872,432 C868,424 860,422 854,424 C850,426 848,430 846,434 Z" fill="#1b1316"/>
 <path d="M850.4,431.6 L855.6,432 M862,432.4 L867,432" stroke="#3d4a5c" stroke-width="1.5"/>
 <path d="M855.4,446.2 L861.6,446.6" stroke="#9a5a52" stroke-width="1.3"/>
 <circle cx="870.8" cy="447" r="1.3" fill="#b52a36"/>
 <path d="M826,464.6 L834,462.4 L836,468 L824,468 Z" fill="#f2f2f2"/>
</g>
</g>
</svg>
<!-- PPT title bar -->
<svg class="abs" style="left:47px;top:76px" width="726" height="16" viewBox="47 76 726 16" fill="none">
<rect x="61.6" y="81.4" width="4" height="6" rx="0.5" fill="#fbe6e0" stroke="#d9694a" stroke-width="0.6"/>
<path d="M63,83.2 L65,83.2 M63,85 L65,85" stroke="#d9694a" stroke-width="0.5"/>
<path d="M56.8,80.6 L62.4,80 L62.4,88.8 L56.8,88.2 Z" fill="#d04a23"/>
<path d="M58.5,86.7 L58.5,82.3 L59.8,82.3 C61.2,82.3 61.2,84.7 59.8,84.7 L58.5,84.7" stroke="#fff" stroke-width="0.9"/>
<path d="M734.6,86.6 L739,86.6" stroke="#777" stroke-width="0.9"/>
<rect x="750.4" y="83.6" width="3.8" height="3.4" stroke="#555" stroke-width="0.7"/>
<path d="M751.6,83.4 L751.6,82.4 L755.4,82.4 L755.4,85.6 L754.4,85.6" stroke="#555" stroke-width="0.7"/>
<path d="M766.2,82.8 L770.4,87.2 M770.4,82.8 L766.2,87.2" stroke="#333" stroke-width="0.9"/>
</svg>
<!-- status bar icons -->
<svg class="abs" style="left:600px;top:460px" width="172" height="8" viewBox="600 460 172 8" fill="none" stroke="#6a6a6a" stroke-width="0.8">
<rect x="735.6" y="460" width="19.8" height="8" fill="#c8c8c8" stroke="none"/>
<circle cx="646.5" cy="466" r="3.4"/><path d="M646.5,468 L646.5,464.6"/>
<path d="M660.4,462.6 L662.6,462.6 L662.6,468 M664,463 L666.4,463 M664,464.8 L666.4,464.8 M664,466.6 L666.4,466.6"/>
<circle cx="680.3" cy="466" r="3.4"/><path d="M680.3,468 L680.3,464.6"/>
<rect x="701.4" y="462.4" width="7.4" height="6"/><path d="M703,464.4 L707,466.8"/>
<rect x="721.6" y="462.4" width="2.6" height="1.8"/><rect x="725.6" y="462.4" width="2.6" height="1.8"/><rect x="721.6" y="465.8" width="2.6" height="1.8"/><rect x="725.6" y="465.8" width="2.6" height="1.8"/>
<path d="M741.6,463 L744.8,463 L744.8,468 M748.6,463 L745.4,463 L745.4,468 M741.6,463 L741.6,468 M748.6,463 L748.6,468"/>
<rect x="762.2" y="462.6" width="6.8" height="4.6"/><path d="M762.2,463.4 L769,463.4"/>
</svg>
<!-- presenter name tag -->
<div class="abs" style="left:52px;top:457.5px;width:112px;height:11px;background:rgba(70,70,70,.86);border-radius:0 3px 0 0;z-index:4"></div>
<!-- cursor -->
<svg class="abs" style="left:711px;top:238px" width="10" height="14" viewBox="0 0 10 14"><path d="M1.5,1.2 L1.5,10 L3.6,8.2 L5.2,11.8 L6.6,11.2 L5,7.6 L7.8,7.4 Z" fill="#fff" stroke="#333" stroke-width="0.7"/></svg>
</div></body></html>
